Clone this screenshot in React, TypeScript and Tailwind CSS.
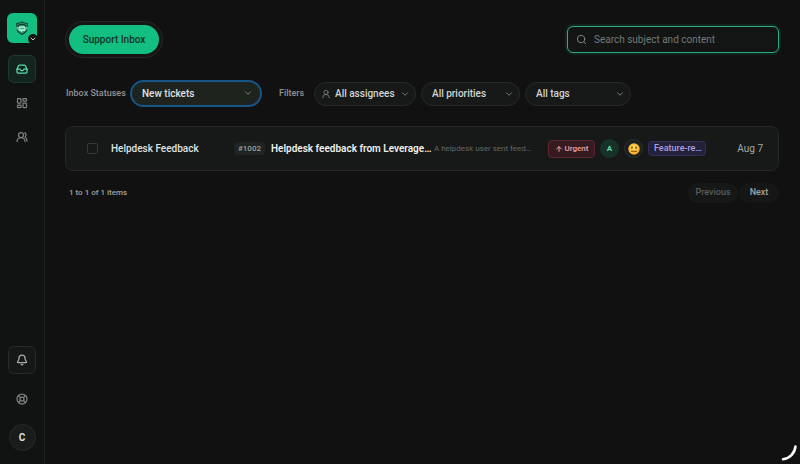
import type { ReactNode } from "react";
import {
  ArrowUp,
  Bell,
  ChevronDown,
  Inbox,
  LayoutDashboard,
  LifeBuoy,
  Search,
  UserRound,
  UsersRound,
} from "lucide-react";

const Logo = () => (
  <svg viewBox="0 0 24 24" className="h-[14px] w-[14px]" fill="none">
    <path
      d="M12 1.500c3 2 6 2.500 9 3v8c0 5-4 8-9 10.500-5-2.500-9-5.500-9-10.500v-8c3-.5 6-1 9-3z"
      fill="#2b9873"
      stroke="#123c30"
      strokeWidth="1.800"
    />
    <path d="M5.500 10.500a6.500 5 0 0 1 13 0" stroke="#0b2b22" strokeWidth="2" />
    <path d="M7.500 9h9a1.500 1.500 0 0 1 1.500 1.500v5a1.500 1.500 0 0 1-1.500 1.500H14l-4 2.500V17H7.500A1.500 1.500 0 0 1 6 15.500v-5A1.500 1.500 0 0 1 7.500 9z" fill="#9cebce" />
    <path d="M8.500 13h7" stroke="#1a7d5d" strokeWidth="1.200" />
    <path d="M3.500 10v4.500M20.500 10v4.500" stroke="#9cebce" strokeWidth="1.800" />
  </svg>
);

const NeutralFace = () => (
  <svg viewBox="0 0 24 24" className="h-3 w-3" role="img" aria-label="Neutral">
    <defs>
      <radialGradient id="face" cx="50%" cy="40%" r="60%">
        <stop offset="0%" stopColor="#ffe45c" />
        <stop offset="100%" stopColor="#f5a524" />
      </radialGradient>
    </defs>
    <circle cx="12" cy="12" r="11.500" fill="url(#face)" />
    <ellipse cx="8" cy="9.500" rx="1.600" ry="2.300" fill="#6b3d0c" />
    <ellipse cx="16" cy="9.500" rx="1.600" ry="2.300" fill="#6b3d0c" />
    <path d="M7 16.500h10" stroke="#6b3d0c" strokeWidth="1.800" strokeLinecap="round" />
  </svg>
);

type FilterProps = {
  label: string;
  value: string;
  width: string;
  icon?: ReactNode;
};

const Filter = ({ label, value, width, icon }: FilterProps) => (
  <div className={`relative ${width}`}>
    {icon}
    <select
      aria-label={label}
      className={`block h-6 w-full appearance-none rounded-full border border-[#252a28] bg-[#161918] pr-4 text-[10px] font-medium text-[#d3d5d4] outline-none ${
        icon ? "pl-5" : "pl-[10px]"
      }`}
    >
      <option>{value}</option>
    </select>
    <ChevronDown className="pointer-events-none absolute top-[7px] right-[6px] h-[10px] w-[10px] text-[#8b8f8d]" />
  </div>
);

const Sidebar = () => (
  <aside className="flex w-[45px] shrink-0 flex-col items-center border-r border-[#1c211f] bg-[#111312] py-[13px]">
    <button
      aria-label="Switch workspace"
      className="relative flex h-[30px] w-[30px] items-center justify-center rounded-md bg-[#12be80]"
    >
      <Logo />
      <span className="absolute -right-px -bottom-px flex h-[10px] w-[10px] items-center justify-center rounded-full bg-[#111312]">
        <ChevronDown className="h-2 w-2 text-[#c5c8c6]" strokeWidth={3} />
      </span>
    </button>
    <nav className="mt-3 flex flex-col items-center gap-[6px]">
      <a
        href="#inbox"
        aria-label="Inbox"
        className="flex h-7 w-7 items-center justify-center rounded-md border border-[#1b3b2f] bg-[#12241d] text-[#5fdcaa]"
      >
        <Inbox className="h-3 w-3" strokeWidth={2.5} />
      </a>
      <a href="#dashboard" aria-label="Dashboard" className="flex h-7 w-7 items-center justify-center text-[#7d817f]">
        <LayoutDashboard className="h-3 w-3" strokeWidth={2.5} />
      </a>
      <a href="#contacts" aria-label="Contacts" className="flex h-7 w-7 items-center justify-center text-[#7d817f]">
        <UsersRound className="h-3 w-3" strokeWidth={2.5} />
      </a>
    </nav>
    <div className="mt-auto flex flex-col items-center gap-3">
      <button
        aria-label="Notifications"
        className="flex h-7 w-7 items-center justify-center rounded-md border border-[#262a28] bg-[#151817] text-[#a9adab]"
      >
        <Bell className="h-3 w-3" strokeWidth={2.5} />
      </button>
      <a href="#help" aria-label="Help" className="flex h-[26px] w-6 items-center justify-center text-[#7d817f]">
        <LifeBuoy className="h-3 w-3" strokeWidth={2.5} />
      </a>
      <button className="flex h-[27px] w-[27px] items-center justify-center rounded-full border border-[#262a28] bg-[#191c1b] text-[10px] font-bold text-[#dcdedd]">
        C
      </button>
    </div>
  </aside>
);

const TicketRow = () => (
  <li className="flex h-[45px] items-center rounded-lg border border-[#252827] bg-[#171918] pr-[15px] pl-[21px]">
    <input
      type="checkbox"
      aria-label="Select Helpdesk Feedback"
      className="h-[11px] w-[11px] shrink-0 appearance-none rounded-xs border border-[#343836]"
    />
    <a href="#ticket-1002" className="ml-[13px] flex min-w-0 flex-1 items-center">
      <span className="w-[123px] shrink-0 text-[10px] font-medium text-[#dfe1e0]">Helpdesk Feedback</span>
      <span className="flex h-[13px] w-[31px] shrink-0 items-center justify-center rounded-sm bg-[#1f2322] text-[8px] font-medium text-[#9da09e]">
        #1002
      </span>
      <span className="ml-[6px] w-[163px] shrink-0 text-[10px] font-semibold whitespace-nowrap text-[#eceeed]">
        Helpdesk feedback from Leverage…
      </span>
      <span className="min-w-0 flex-1 text-[8px] whitespace-nowrap text-[#626664]">A helpdesk user sent feed…</span>
    </a>
    <div className="flex shrink-0 items-center gap-[5px]">
      <span className="flex h-[18px] w-[47px] items-center justify-center gap-[2px] rounded-sm border border-[#61252f] bg-[#351a1f] text-[8px] font-medium text-[#eba4ad]">
        <ArrowUp className="h-2 w-2" strokeWidth={3} />
        Urgent
      </span>
      <span className="flex h-[19px] w-[19px] items-center justify-center rounded-full bg-[#173228] text-[8px] font-bold text-[#5fdcaa]">
        A
      </span>
      <span className="flex h-[19px] w-[19px] items-center justify-center rounded-full border border-[#2b2f31] bg-[#1c1f20]">
        <NeutralFace />
      </span>
      <span className="h-[15px] w-[58px] rounded-sm border border-[#352f58] bg-[#24213a] pl-[5px] text-[9px] leading-[13px] font-medium text-[#aca0e3]">
        Feature-re…
      </span>
    </div>
    <time className="w-[57px] shrink-0 text-right text-[10px] text-[#a5a8a6]">Aug 7</time>
  </li>
);

const App = () => {
  return (
    <div className="flex min-h-screen bg-[#111111] font-['Roboto','Liberation_Sans',sans-serif] text-[#d3d5d4]">
      <Sidebar />
      <main className="min-w-0 flex-1 pt-[21px] pr-[21px] pl-5">
        <header className="flex items-center justify-between">
          <div className="rounded-full border border-[#262626] bg-[#151515] p-[3px]">
            <button className="block h-[29px] w-[90px] rounded-full bg-[#12be80] text-[10px] font-medium text-[#0d3527]">
              Support Inbox
            </button>
          </div>
          <div className="relative w-[212px]">
            <Search className="absolute top-2 left-[9px] h-[11px] w-[11px] text-[#8b8f8d]" />
            <input
              type="search"
              aria-label="Search tickets"
              placeholder="Search subject and content"
              className="block h-[27px] w-full rounded-md border border-[#2fac7e] bg-[#121513] pr-2 pl-[26px] text-[10px] ring-2 ring-[#10251c] outline-none placeholder:text-[#757977]"
            />
          </div>
        </header>

        <div className="mt-[22px] flex items-center text-[9px] font-medium text-[#8f9391]">
          <label htmlFor="status" className="w-[65px] pl-px">
            Inbox Statuses
          </label>
          <div className="relative w-[132px]">
            <select
              id="status"
              className="block h-[27px] w-full appearance-none rounded-full border-2 border-[#155587] bg-[#1e231e] pr-5 pl-[10px] text-[10px] font-medium text-[#dfe1e0] outline-none"
            >
              <option>New tickets</option>
            </select>
            <ChevronDown className="pointer-events-none absolute top-2 right-[9px] h-[10px] w-[10px] text-[#8b8f8d]" />
          </div>
          <span className="ml-[17px] w-[35px]">Filters</span>
          <div className="flex gap-[5px]">
            <Filter
              label="Assignee"
              value="All assignees"
              width="w-[102px]"
              icon={
                <UserRound className="pointer-events-none absolute top-[7px] left-[7px] h-[10px] w-[10px] text-[#7d817f]" />
              }
            />
            <Filter label="Priority" value="All priorities" width="w-[99px]" />
            <Filter label="Tag" value="All tags" width="w-[106px]" />
          </div>
        </div>

        <ul className="mt-[19px]">
          <TicketRow />
        </ul>

        <footer className="mt-3 flex items-center justify-between pl-1 font-medium text-[#a0a3a1]">
          <p className="text-[8px]">1 to 1 of 1 items</p>
          <div className="flex gap-px text-[9px]">
            <button disabled className="h-5 w-[50px] rounded-full bg-[#161817] text-[#5b5e5c]">
              Previous
            </button>
            <button className="h-5 w-10 rounded-full bg-[#151716]">Next</button>
          </div>
        </footer>
      </main>

      <svg className="fixed right-[3px] bottom-[3px] h-4 w-4" viewBox="0 0 16 16" fill="none" aria-hidden="true">
        <path
          d="M14.500 1.500A14.500 14.500 0 0 1 2 14.300"
          stroke="#ffffff"
          strokeWidth="2.500"
          strokeLinecap="round"
        />
      </svg>
    </div>
  );
};

export default App;
